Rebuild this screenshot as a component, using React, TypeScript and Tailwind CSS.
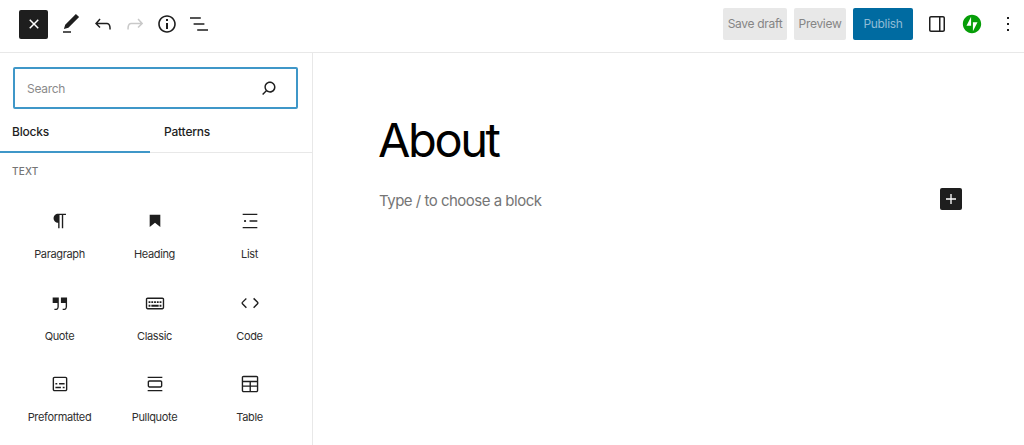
import React from "react";

const P = {
  close: "M12 13.06l3.712 3.713 1.061-1.06L13.061 12l3.712-3.712-1.06-1.06L12 10.938 8.288 7.227l-1.061 1.06L10.939 12l-3.712 3.712 1.06 1.061L12 13.061z",
  edit: "M20.1 5.1L16.9 2 6.2 12.7l-1.3 4.4 4.5-1.3L20.1 5.1zM4 20.8h8v-1.5H4v1.5z",
  undo: "M18.3 11.7c-.6-.6-1.4-.9-2.3-.9H6.7l2.9-3.3-1.1-1-4.5 5L8.5 16l1-1-2.7-2.7H16c.5 0 .9.2 1.3.5 1 1 1 3.4 1 4.5v.3h1.5v-.2c0-1.5 0-4.3-1.5-5.7z",
  redo: "M15.6 6.5l-1.1 1 2.9 3.3H8c-.9 0-1.7.3-2.3.9-1.4 1.5-1.4 4.2-1.4 5.6v.2h1.5v-.3c0-1.1 0-3.5 1-4.5.3-.3.7-.5 1.3-.5h9.2L14.5 15l1.1 1.1 4.6-4.6-4.6-5z",
  info: "M12 3.2c-4.8 0-8.8 3.9-8.8 8.8 0 4.8 3.9 8.8 8.8 8.8 4.8 0 8.8-3.9 8.8-8.8 0-4.8-4-8.8-8.8-8.8zm0 16c-4 0-7.2-3.3-7.2-7.2C4.8 8 8 4.8 12 4.8s7.2 3.3 7.2 7.2c0 4-3.2 7.2-7.2 7.2zM11 17h2v-6h-2v6zm0-8h2V7h-2v2z",
  listView: "M13.8 5.2H3v1.5h10.8V5.2zm-3.6 12v1.5H21v-1.5H10.2zm7.2-6H6.6v1.5h10.8v-1.5z",
  drawer: "M18 4H6c-1.1 0-2 .9-2 2v12c0 1.1.9 2 2 2h12c1.1 0 2-.9 2-2V6c0-1.1-.9-2-2-2zM6 18.5c-.3 0-.5-.2-.5-.5V6c0-.3.2-.5.5-.5h8v13H6zm12.5-.5c0 .3-.2.5-.5.5h-2.5v-13H18c.3 0 .5.2.5.5v12z",
  more: "M13 19h-2v-2h2v2zm0-6h-2v-2h2v2zm0-6h-2V5h2v2z",
  search: "M13 5c-3.3 0-6 2.7-6 6 0 1.4.5 2.7 1.3 3.7l-3.8 3.8 1.1 1.1 3.8-3.8c1 .8 2.3 1.3 3.7 1.3 3.3 0 6-2.7 6-6S16.3 5 13 5zm0 10.5c-2.5 0-4.5-2-4.5-4.5s2-4.5 4.5-4.5 4.5 2 4.5 4.5-2 4.5-4.5 4.5z",
  paragraph: "m9.99609 14v-.2251l.00391.0001v6.225h1.5v-14.5h2.5v14.5h1.5v-14.5h3v-1.5h-8.50391c-2.76142 0-5 2.23858-5 5 0 2.7614 2.23858 5 5 5z",
  heading: "M6.2 5.2v13.4l5.8-4.8 5.8 4.8V5.2z",
  list: "M4 4v1.5h16V4H4zm7.5 8.75h8.5v-1.5h-8.5v1.5zM4 20h16v-1.5H4V20zm3.8-8c0-.7-.6-1.2-1.2-1.2s-1.2.5-1.2 1.2.6 1.2 1.2 1.2 1.2-.5 1.2-1.2z",
  quote: "M13 6v6h5.2v4c0 .8-.2 1.4-.5 1.7-.6.6-1.6.6-2.5.5h-.3v1.5h.5c1 0 2.3-.1 3.3-1 .6-.6 1-1.6 1-2.8V6H13zm-9 6h5.2v4c0 .8-.2 1.4-.5 1.7-.6.6-1.6.6-2.5.5h-.3v1.5h.5c1 0 2.3-.1 3.3-1 .6-.6 1-1.6 1-2.8V6H4v6z",
  classic: "M20 6H4c-1.1 0-2 .9-2 2v9c0 1.1.9 2 2 2h16c1.1 0 2-.9 2-2V8c0-1.1-.9-2-2-2zm.5 11c0 .3-.2.5-.5.5H4c-.3 0-.5-.2-.5-.5V8c0-.3.2-.5.5-.5h16c.3 0 .5.2.5.5v9zM10 10H8v2h2v-2zm-5 2h2v-2H5v2zm8-2h-2v2h2v-2zm-5 6h8v-2H8v2zm6-4h2v-2h-2v2zm3 0h2v-2h-2v2zm0 4h2v-2h-2v2zM5 16h2v-2H5v2z",
  code: "M20.8 10.7l-4.3-4.3-1.1 1.1 4.3 4.3c.1.1.1.3 0 .4l-4.3 4.3 1.1 1.1 4.3-4.3c.7-.8.7-1.9 0-2.6zM4.2 11.8l4.3-4.3-1-1-4.3 4.3c-.7.7-.7 1.8 0 2.5l4.3 4.3 1.1-1.1-4.3-4.3c-.2-.1-.2-.3-.1-.4z",
  preformatted: "M18 4H6c-1.1 0-2 .9-2 2v12c0 1.1.9 2 2 2h12c1.1 0 2-.9 2-2V6c0-1.1-.9-2-2-2zm.5 14c0 .3-.2.5-.5.5H6c-.3 0-.5-.2-.5-.5V6c0-.3.2-.5.5-.5h12c.3 0 .5.2.5.5v12zM7 16.5h6V15H7v1.5zm4-4h6V11h-6v1.5zM9 11H7v1.5h2V11zm6 5.5h2V15h-2v1.5z",
  pullquote: "M18 8H6c-1.1 0-2 .9-2 2v4c0 1.1.9 2 2 2h12c1.1 0 2-.9 2-2v-4c0-1.1-.9-2-2-2zm.5 6c0 .3-.2.5-.5.5H6c-.3 0-.5-.2-.5-.5v-4c0-.3.2-.5.5-.5h12c.3 0 .5.2.5.5v4zM4 4v1.5h16V4H4zm0 16h16v-1.5H4V20z",
  table: "M19 3H5c-1.1 0-2 .9-2 2v14c0 1.1.9 2 2 2h14c1.1 0 2-.9 2-2V5c0-1.1-.9-2-2-2zM5 4.5h14c.3 0 .5.2.5.5v3.5h-15V5c0-.3.2-.5.5-.5zm8 5.5h6.5v3.5H13V10zm-1.5 3.5h-7V10h7v3.5zm-7 5.5v-4h7v4.5H5c-.3 0-.5-.2-.5-.5zm14.5.5h-6V15h6.5v4c0 .3-.2.5-.5.5z",
  plus: "M18 11.2h-5.2V6h-1.6v5.2H6v1.6h5.2V18h1.6v-5.2H18z",
};

function Icon({ d, className = "w-6 h-6 fill-[#1e1e1e]" }: { d: string; className?: string }) {
  return (
    <svg viewBox="0 0 24 24" className={className}>
      <path d={d} fillRule="evenodd" />
    </svg>
  );
}

const blocks = [
  ["Paragraph", P.paragraph],
  ["Heading", P.heading],
  ["List", P.list],
  ["Quote", P.quote],
  ["Classic", P.classic],
  ["Code", P.code],
  ["Preformatted", P.preformatted],
  ["Pullquote", P.pullquote],
  ["Table", P.table],
];

function ToolIcon({ d, muted }: { d: string; muted?: boolean }) {
  return (
    <div className="w-8 h-8 flex items-center justify-center">
      <Icon d={d} className={muted ? "w-6 h-6 fill-[#c9c9c9]" : "w-6 h-6 fill-[#1e1e1e]"} />
    </div>
  );
}

export default function App() {
  return (
    <div className="w-[1024px] h-[445px] overflow-hidden bg-white flex flex-col font-['Inter','Liberation_Sans',sans-serif] text-[#1e1e1e]">
      <header className="h-[53px] shrink-0 border-b border-[#e8e8e8] flex items-center pl-[19px] pb-[4px]">
        <div className="w-[29px] h-[29px] rounded-[2px] bg-[#1e1e1e] flex items-center justify-center mr-[7px]">
          <Icon d={P.close} className="w-6 h-6 fill-white" />
        </div>
        <ToolIcon d={P.edit} />
        <ToolIcon d={P.undo} />
        <ToolIcon d={P.redo} muted />
        <ToolIcon d={P.info} />
        <ToolIcon d={P.listView} />
        <div className="flex-1" />
        <div className="h-8 w-16 rounded-[2px] bg-[#e8e8e8] text-[#858585] text-xs tracking-[-0.3px] flex items-center justify-center">Save draft</div>
        <div className="h-8 w-[52px] ml-[7px] rounded-[2px] bg-[#e8e8e8] text-[#858585] text-xs tracking-[-0.3px] flex items-center justify-center">Preview</div>
        <div className="h-8 w-[60px] ml-[7px] rounded-[2px] bg-[#006ba1] text-[#8fbcd6] text-xs tracking-[-0.3px] flex items-center justify-center">Publish</div>
        <div className="w-8 h-8 ml-2 flex items-center justify-center">
          <Icon d={P.drawer} />
        </div>
        <div className="w-[18px] h-[18px] ml-[10px] flex items-center justify-center">
          <svg viewBox="0 0 24 24" className="w-[22px] h-[22px] shrink-0 fill-[#069e08]">
            <path d="M12,2C6.5,2,2,6.5,2,12s4.5,10,10,10s10-4.5,10-10S17.5,2,12,2z M11,14H6l5-10V14z M13,20V10h5L13,20z" />
          </svg>
        </div>
        <div className="w-8 h-8 ml-[11px] flex items-center justify-center">
          <Icon d={P.more} />
        </div>
      </header>

      <div className="flex flex-1 min-h-0">
        <aside className="w-[313px] shrink-0 border-r border-[#e8e8e8] flex flex-col">
          <div className="shrink-0 pt-[14px] pl-[13px] pr-[14px]">
            <div className="h-[42px] rounded-[2px] border-2 border-[#3f97c8] flex items-center pl-[12px] pr-[16px]">
              <span className="flex-1 pt-[1px] text-xs tracking-[-0.3px] text-[#8a8a8a]">Search</span>
              <Icon d={P.search} className="w-[22px] h-[22px] fill-[#1e1e1e]" />
            </div>
          </div>
          <div className="shrink-0 h-[44px] flex border-b border-[#e8e8e8]">
            <div className="w-[150px] -mb-px border-b-2 border-[#3f97c8] pl-3 pt-[3px] flex items-center text-xs font-medium tracking-[-0.2px]">Blocks</div>
            <div className="pl-[14px] pt-[3px] flex items-center text-xs font-medium tracking-[-0.2px]">Patterns</div>
          </div>
          <div className="shrink-0 pl-3 pt-[12px] text-[10px] leading-[12px] font-medium tracking-[0.2px] text-[#757575]">TEXT</div>
          <div className="shrink-0 grid grid-cols-[95px_95px_95px] auto-rows-[81.5px] pl-3 pt-[33px]">
            {blocks.map(([name, d]) => (
              <div key={name} className="flex flex-col items-center">
                <Icon d={d} className="w-[22px] h-[22px] fill-[#1e1e1e]" />
                <div className="mt-[15px] text-[11px] leading-[14px] tracking-[-0.35px] text-[#2f2f2f]">{name}</div>
              </div>
            ))}
          </div>
        </aside>

        <main className="flex-1 pl-[65px] pr-[62px] pt-[57px]">
          <h1 className="text-[47px] leading-[60px] font-normal text-black tracking-[-2.4px]">About</h1>
          <div className="mt-[18px] flex items-start justify-between h-[22px]">
            <span className="mt-[2px] ml-px text-[15px] leading-[22px] tracking-[-0.5px] text-[#757575]">Type / to choose a block</span>
            <div className="w-[22px] h-[22px] rounded-[2px] bg-[#1e1e1e] flex items-center justify-center">
              <Icon d={P.plus} className="w-5 h-5 fill-white" />
            </div>
          </div>
        </main>
      </div>
    </div>
  );
}
